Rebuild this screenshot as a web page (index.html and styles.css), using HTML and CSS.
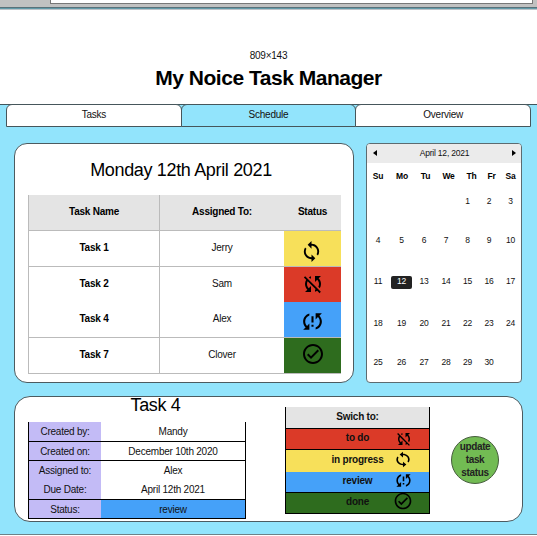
FILE: index.html
```html
<!DOCTYPE html>
<html lang="en">
<head>
<meta charset="utf-8">
<title>My Noice Task Manager</title>
<link rel="stylesheet" href="styles.css">
</head>
<body>
<svg class="defs" width="0" height="0">
  <symbol id="sync" viewBox="0 0 24 24" preserveAspectRatio="none"><path d="M12 4V1L8 5l4 4V6c3.31 0 6 2.69 6 6 0 1.01-.25 1.97-.7 2.8l1.46 1.46C19.54 15.03 20 13.57 20 12c0-4.42-3.58-8-8-8zm0 14c-3.31 0-6-2.69-6-6 0-1.01.25-1.97.7-2.8L5.24 7.74C4.46 8.97 4 10.43 4 12c0 4.42 3.58 8 8 8v3l4-4-4-4v3z"/></symbol>
  <symbol id="off" viewBox="0 0 24 24"><path d="M10 6.35V4.26c-.8.21-1.55.54-2.23.96l1.46 1.46c.25-.12.5-.24.77-.33zm-7.14-.94l2.36 2.36C4.45 8.99 4 10.44 4 12c0 2.21.91 4.2 2.36 5.64L4 20h6v-6l-2.24 2.24C6.68 15.15 6 13.66 6 12c0-1 .25-1.94.68-2.77l8.08 8.08c-.25.13-.5.25-.77.34v2.09c.8-.21 1.55-.54 2.23-.96l2.36 2.36 1.27-1.27L4.14 4.14 2.86 5.41zM20 4h-6v6l2.24-2.24C17.32 8.85 18 10.34 18 12c0 1-.25 1.94-.68 2.77l1.46 1.46C19.55 15.01 20 13.56 20 12c0-2.21-.91-4.2-2.36-5.64L20 4z"/></symbol>
  <symbol id="problem" viewBox="0 0 24 24"><path d="M3 12c0 2.21.91 4.2 2.36 5.64L3 20h6v-6l-2.24 2.24C5.68 15.15 5 13.66 5 12c0-2.61 1.67-4.83 4-5.65V4.26C5.55 5.15 3 8.27 3 12zm8 5h2v-2h-2v2zM21 4h-6v6l2.24-2.24C18.32 8.85 19 10.34 19 12c0 2.61-1.67 4.83-4 5.65v2.09c3.45-.89 6-4.01 6-7.74 0-2.21-.91-4.2-2.36-5.64L21 4zm-10 9h2V7h-2v6z"/></symbol>
  <symbol id="check" viewBox="0 0 24 24"><path d="M16.59 7.58L10 14.17l-2.59-2.58L6 13l4 4 8-8zM12 2C6.48 2 2 6.48 2 12s4.48 10 10 10 10-4.48 10-10S17.52 2 12 2zm0 18c-4.42 0-8-3.58-8-8s3.58-8 8-8 8 3.58 8 8-3.58 8-8 8z"/></symbol>
</svg>
<div class="chrome"><div class="address"></div></div>
<header class="header">
  <div class="size">809×143</div>
  <h1>My Noice Task Manager</h1>
</header>
<main>
  <nav class="tabs"><a>Tasks</a><a class="active">Schedule</a><a>Overview</a></nav>
  <div class="top">
    <section class="card schedule">
      <h2>Monday 12th April 2021</h2>
      <div class="tasks">
        <div class="row head"><b>Task Name</b><b>Assigned To:</b><b>Status</b></div>
        <div class="row"><b>Task 1</b><span>Jerry</span><i class="yellow"><svg class="i-sync"><use href="#sync"/></svg></i></div>
        <div class="row open"><b>Task 2</b><span>Sam</span><i class="red"><svg class="i-off"><use href="#off"/></svg></i></div>
        <div class="row"><b>Task 4</b><span>Alex</span><i class="blue"><svg class="i-problem"><use href="#problem"/></svg></i></div>
        <div class="row"><b>Task 7</b><span>Clover</span><i class="green"><svg class="i-check"><use href="#check"/></svg></i></div>
      </div>
    </section>
    <section class="calendar">
      <div class="month"><svg viewBox="0 0 4 6"><path d="M4 0v6L0 3z"/></svg><span>April 12, 2021</span><svg viewBox="0 0 4 6"><path d="M0 0v6l4-3z"/></svg></div>
      <div class="week names"><b>Su</b><b>Mo</b><b>Tu</b><b>We</b><b>Th</b><b>Fr</b><b>Sa</b></div>
      <div class="week w1"><span></span><span></span><span></span><span></span><span>1</span><span>2</span><span>3</span></div>
      <div class="week w2"><span>4</span><span>5</span><span>6</span><span>7</span><span>8</span><span>9</span><span>10</span></div>
      <div class="week w3"><span>11</span><span class="today">12</span><span>13</span><span>14</span><span>15</span><span>16</span><span>17</span></div>
      <div class="week w4"><span>18</span><span>19</span><span>20</span><span>21</span><span>22</span><span>23</span><span>24</span></div>
      <div class="week w5"><span>25</span><span>26</span><span>27</span><span>28</span><span>29</span><span>30</span><span></span></div>
    </section>
  </div>
  <section class="card detail">
    <div class="info">
      <h2>Task 4</h2>
      <dl>
        <dt>Created by:</dt><dd>Mandy</dd>
        <dt>Created on:</dt><dd>December 10th 2020</dd>
        <dt class="open">Assigned to:</dt><dd class="open">Alex</dd>
        <dt>Due Date:</dt><dd>April 12th 2021</dd>
        <dt>Status:</dt><dd class="blue">review</dd>
      </dl>
    </div>
    <div class="switch">
      <div class="opt title">Swich to:</div>
      <div class="opt red">to do<svg class="s-off"><use href="#off"/></svg></div>
      <div class="opt yellow open">in progress<svg class="s-sync"><use href="#sync"/></svg></div>
      <div class="opt blue">review<svg class="s-problem"><use href="#problem"/></svg></div>
      <div class="opt green">done<svg class="s-check"><use href="#check"/></svg></div>
    </div>
    <button class="update">update<br>task<br>status</button>
  </section>
</main>
</body>
</html>
```
FILE: styles.css
```css
* { box-sizing: border-box; }
body { margin: 0; width: 537px; height: 536px; overflow: hidden; background: #fff; color: #111; font: 10px "Liberation Sans", Arial, sans-serif; letter-spacing: -0.23px; }
.defs { display: none; }
.chrome { height: 10px; padding: 0 4px 0 50px; background: linear-gradient(#c1c1c1 7px, #59717a 7px, #59717a 8px, #639aa8 8px, #639aa8 9px, #bdc3c8 9px); }
.address { height: 4px; background: #fff; border: 1px solid #777; border-top: 0; }
.header { height: 94px; padding-top: 40px; text-align: center; }
.size { line-height: 12px; }
h1 { margin: 4px 0 0; font-size: 21px; line-height: 24px; color: #000; letter-spacing: -0.48px; }
main { height: 431px; background: #92e4fc; border-top: 1px solid #40555b; border-bottom: 1px solid #6c8288; }
.tabs { display: flex; width: 525px; margin: -1px 0 0 6px; }
.tabs a { flex: 1 1 0; height: 23px; line-height: 20px; text-align: center; background: #fff; border: 1px solid #46565b; border-radius: 6px 6px 0 0; }
.tabs a + a { margin-left: -1px; }
.tabs .active { background: #92e4fc; }
.top { display: flex; gap: 12px; margin: 16px 0 0 14px; }
.card { background: #fff; border: 1px solid #4c5b60; border-radius: 13px; }
.schedule { width: 340px; height: 240px; padding: 14px 12px 0 13px; }
h2 { margin: 0; font-weight: normal; font-size: 18px; letter-spacing: -0.34px; text-align: center; color: #000; }
.schedule h2 { line-height: 24px; padding-right: 7px; }
.tasks { margin-top: 13px; border-left: 1px solid #bbb; }
.row { display: grid; grid-template-columns: 131px 124px 57px; height: 36px; border-bottom: 1px solid #bbb; text-align: center; line-height: 34px; }
.row.open { height: 35px; border-bottom: 0; }
.row > :first-child { border-right: 1px solid #bbb; }
.row b { color: #000; }
.head { background: #e4e4e4; }
.row i { display: flex; align-items: center; justify-content: center; }
.yellow { background: #f7e05a; }
.red { background: #db3a28; }
.blue { background: #45a1f9; }
.green { background: #2e6c1e; }
.i-sync { width: 23px; height: 23px; margin: 5px 3px 0 0; }
.i-off { width: 24px; height: 24px; margin-top: -1px; }
.i-problem { width: 25px; height: 25px; margin: 3px 1px 0 0; }
.i-check { width: 24px; height: 24px; margin-top: -4px; }
.calendar { width: 156px; height: 240px; background: #fff; border: 1px solid #5c6b70; border-radius: 4px; overflow: hidden; font-size: 8.5px; letter-spacing: -0.2px; }
.month { display: flex; justify-content: space-between; align-items: center; height: 19px; padding: 0 5px 1px 6px; background: #ebebeb; }
.month svg { width: 4px; height: 6px; }
.week { display: grid; grid-template-columns: 24px 23px 22px 22px 21px 22px 21px; margin-left: -1px; height: 13px; line-height: 11px; text-align: center; }
.names { margin-top: 8px; grid-template-columns: 24px 24px 23px 23px 23px 17px 21px; color: #000; }
.w1 { margin-top: 12px; }
.w2 { margin-top: 26px; }
.w3 { margin-top: 28px; }
.w4 { margin-top: 29px; }
.w5 { margin-top: 26px; }
.today { background: #222; color: #fff; border-radius: 2px; margin: 0 1px; }
.detail { display: flex; width: 509px; height: 126px; margin: 13px 0 0 14px; padding-left: 13px; border-radius: 16px; }
.info { width: 218px; }
.info h2 { line-height: 17px; height: 25px; padding-left: 37px; }
dl { display: grid; grid-template-columns: 72px 1fr; grid-template-rows: 20px 19px 19px 20px 19px; margin: 0; border: solid #000; border-width: 0 1px; text-align: center; line-height: 19px; }
dt, dd { margin: 0; border-bottom: 1px solid #000; }
dt { background: #c3bbf6; }
dl .open { border-bottom: 0; }
.switch { width: 145px; margin: 10px 0 0 39px; border: solid #000; border-width: 0 1px; height: 107px; font-weight: bold; }
.opt { position: relative; height: 21px; border-bottom: 1px solid #000; line-height: 18px; text-align: center; }
.opt.open { border-bottom: 0; height: 22px; line-height: 20px; }
.opt.title { height: 22px; line-height: 19px; background: #e4e4e4; }
.opt.green { line-height: 17px; }
.opt svg { position: absolute; }
.s-off { width: 18px; height: 18px; left: 109px; top: 1px; }
.s-sync { width: 20px; height: 17px; left: 107px; top: 1px; }
.s-problem { width: 19px; height: 19px; left: 108px; top: -1px; }
.s-check { width: 20px; height: 20px; left: 107px; top: -2px; }
.update { width: 48px; height: 48px; margin: 39px 0 0 21px; padding: 0 0 2px; border: 1px solid #465d3d; border-radius: 50%; background: #72bb53; color: #222; font: bold 10px/13px "Liberation Sans", Arial, sans-serif; letter-spacing: -0.35px; }
```
